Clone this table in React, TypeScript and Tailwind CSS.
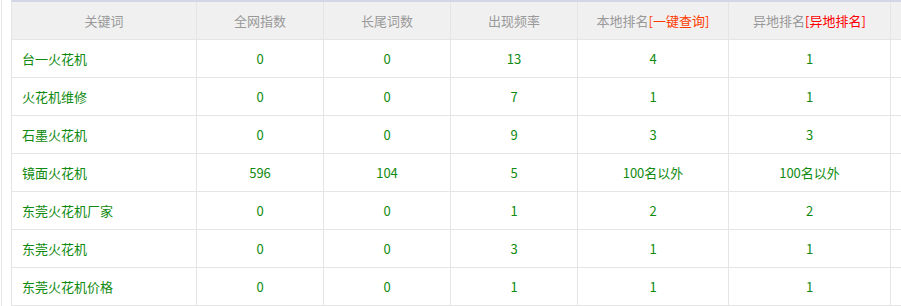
import React from 'react';

type Row = {
  keyword: string;
  total: string;
  longTail: string;
  freq: string;
  local: string;
  remote: string;
};

const rows: Row[] = [
  { keyword: '台一火花机', total: '0', longTail: '0', freq: '13', local: '4', remote: '1' },
  { keyword: '火花机维修', total: '0', longTail: '0', freq: '7', local: '1', remote: '1' },
  { keyword: '石墨火花机', total: '0', longTail: '0', freq: '9', local: '3', remote: '3' },
  { keyword: '镜面火花机', total: '596', longTail: '104', freq: '5', local: '100名以外', remote: '100名以外' },
  { keyword: '东莞火花机厂家', total: '0', longTail: '0', freq: '1', local: '2', remote: '2' },
  { keyword: '东莞火花机', total: '0', longTail: '0', freq: '3', local: '1', remote: '1' },
  { keyword: '东莞火花机价格', total: '0', longTail: '0', freq: '1', local: '1', remote: '1' },
];

const headCell =
  'flex h-[38px] items-center justify-center border-r border-b border-[#e5e5e5] bg-[#f0f0f0] text-[#999]';
const bodyCell =
  'flex h-[38px] items-center justify-center border-r border-b border-[#e5e5e5] bg-white text-[#108a10]';

const App = () => {
  return (
    <div
      className="h-[306px] w-[901px] overflow-hidden bg-white text-[13px]"
      style={{ fontFamily: '"Microsoft YaHei", "Noto Sans CJK SC", sans-serif' }}
    >
      <div className="ml-[1px] h-full border-l border-[#e8e8e8] pl-[9px]">
        <div className="grid w-[1021px] grid-cols-[185px_127px_127px_127px_151px_162px_120px] border-l border-t-2 border-[#e5e5e5] border-t-[#d3d6e4]">
          <div className={headCell}>关键词</div>
          <div className={headCell}>全网指数</div>
          <div className={headCell}>长尾词数</div>
          <div className={headCell}>出现频率</div>
          <div className={headCell}>
            本地排名<span className="text-[#ff3c00]">[一键查询]</span>
          </div>
          <div className={headCell}>
            异地排名<span className="text-[#ff0000]">[异地排名]</span>
          </div>
          <div className={headCell}></div>

          {rows.map((row) => (
            <React.Fragment key={row.keyword}>
              <div className={`${bodyCell} justify-start pl-[10px]`}>{row.keyword}</div>
              <div className={bodyCell}>{row.total}</div>
              <div className={bodyCell}>{row.longTail}</div>
              <div className={bodyCell}>{row.freq}</div>
              <div className={bodyCell}>{row.local}</div>
              <div className={bodyCell}>{row.remote}</div>
              <div className={bodyCell}></div>
            </React.Fragment>
          ))}
        </div>
      </div>
    </div>
  );
};

export default App;
